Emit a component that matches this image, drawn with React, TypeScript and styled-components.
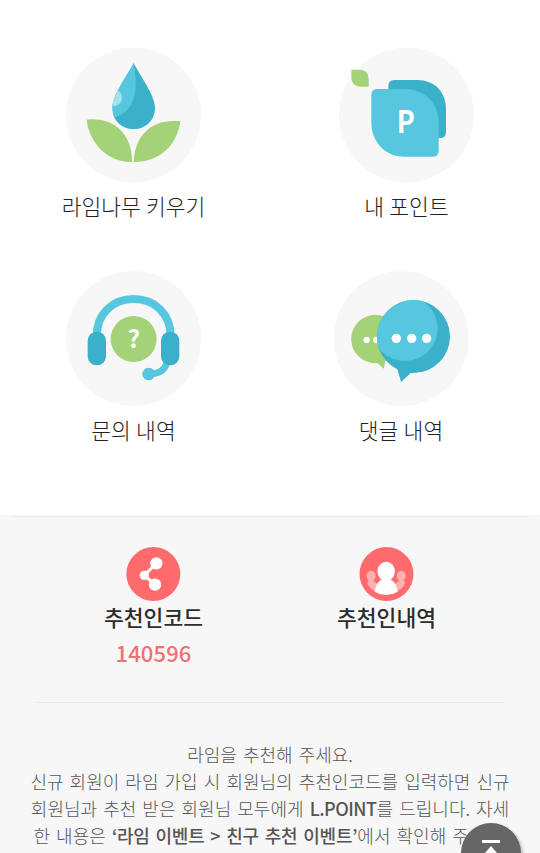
import React from 'react';
import styled, { createGlobalStyle } from 'styled-components';

const GlobalStyle = createGlobalStyle`
  * { box-sizing: border-box; }
  html, body { margin: 0; background: #fff; overflow: hidden; }
  body { font-family: "Noto Sans CJK KR", "Noto Sans", sans-serif; }
`;

const Page = styled.main`
  position: relative;
  width: 540px;
  height: 853px;
  overflow: hidden;
  background: #fff;
`;

const Menu = styled.section`
  height: 515px;
  padding-top: 47px;
`;

const MenuRow = styled.div<{ $second: number }>`
  display: grid;
  grid-template-columns: 267px ${p => p.$second}px;
  height: 224px;
`;

const MenuItem = styled.div`
  display: flex;
  flex-direction: column;
  align-items: center;
`;

const MenuIcon = styled.svg`
  display: block;
  width: 135px;
  height: 136px;
  flex: none;
`;

const MenuLabel = styled.span`
  margin-top: 8px;
  font-size: 21.5px;
  line-height: 30px;
  font-weight: 300;
  color: #222;
  white-space: nowrap;
  word-spacing: 0.5px;
`;

const Referral = styled.section`
  height: 338px;
  padding-top: 1px;
  background: #f7f7f7;
`;

const Rule = styled.hr<{ $left: number; $right: number }>`
  height: 1px;
  border: 0;
  margin: 0 ${p => p.$right}px 0 ${p => p.$left}px;
  background: #ebebeb;
`;

const ReferralRow = styled.div`
  display: grid;
  grid-template-columns: 233px 233px;
  height: 185px;
  padding: 30px 37px 0;
`;

const ReferralItem = styled.div`
  display: flex;
  flex-direction: column;
  align-items: center;
`;

const ReferralIcon = styled.svg`
  display: block;
  width: 55px;
  height: 54px;
`;

const ReferralTitle = styled.strong`
  margin-top: 1px;
  font-size: 21.5px;
  line-height: 30px;
  font-weight: 500;
  color: #2c2c2c;
  white-space: nowrap;
`;

const Code = styled.span`
  margin-top: 5px;
  font-size: 22px;
  line-height: 30px;
  font-weight: 500;
  letter-spacing: 0.1px;
  color: #f27072;
`;

const Guide = styled.p`
  margin: 38px 0 0;
  font-size: 18px;
  line-height: 27px;
  font-weight: 300;
  color: #555;
  text-align: center;
  word-spacing: 2.1px;
`;

const Line = styled.span`
  display: block;
  height: 27px;
  white-space: nowrap;
`;

const Strong = styled.b<{ $tracking: number }>`
  font-weight: 500;
  letter-spacing: ${p => p.$tracking}px;
`;

const TopButton = styled.button`
  position: absolute;
  left: 461px;
  top: 823px;
  width: 60px;
  height: 60px;
  padding: 0;
  border: 0;
  border-radius: 50%;
  background: #666;
  box-shadow: 2px 2px 3px rgba(0, 0, 0, 0.25);
  svg { display: block; }
`;

const TreeIcon = () => (
  <MenuIcon viewBox="48 51 405 408">
    <defs>
      <clipPath id="drop">
        <path d="M251 99C236 132 187 194 187 233C187 270 214 297 251 297S315 270 315 233C315 194 266 132 251 99Z" />
      </clipPath>
    </defs>
    <circle cx="250.500" cy="255" r="202.500" fill="#f7f7f7" />
    <g clipPath="url(#drop)">
      <rect x="180" y="90" width="150" height="220" fill="#3bb0ca" />
      <path d="M251 99C261 157 258 189 248 213C236 242 216 258 180 265V90Z" fill="#57c6df" />
      <circle cx="191" cy="203" r="25.500" fill="#a2e0ea" />
    </g>
    <path d="M110 269C193 260 247 314 246 396C176 397 119 344 110 269Z" fill="#a3d277" />
    <path d="M391 274C308 265 254 313 251 396C325 397 380 351 391 274Z" fill="#a3d277" />
  </MenuIcon>
);

const PointIcon = () => (
  <MenuIcon viewBox="57 51 405 408">
    <circle cx="259.500" cy="255" r="202.500" fill="#f7f7f7" />
    <path d="M94 119H119Q146 120 146 147V170H121Q94 169 94 142Z" fill="#a3d277" />
    <path d="M223 150H291C344 150 378 186 378 239V305Q378 324 360 324H205V168Q205 150 223 150Z" fill="#3bb0ca" />
    <path d="M172 177H257C316 177 356 222 356 280V362Q356 380 338 380H253C194 380 154 335 154 276V195Q154 177 172 177Z" fill="#57c6df" />
    <text x="230" y="309" fontSize="94" fontWeight="700" fontFamily="Noto Sans CJK KR, sans-serif" fill="#fff" textLength="54" lengthAdjust="spacingAndGlyphs">P</text>
  </MenuIcon>
);

const SupportIcon = () => (
  <MenuIcon viewBox="48 33 405 408">
    <circle cx="250.500" cy="235.500" r="202.500" fill="#f7f7f7" />
    <path d="M140 230C140 160 189 117 251 117S362 160 362 230" fill="none" stroke="#57c6df" strokeWidth="24" />
    <path d="M352 306C345 328 331 341 305 341" fill="none" stroke="#57c6df" strokeWidth="20" />
    <circle cx="296" cy="342" r="19" fill="#57c6df" />
    <rect x="113" y="215" width="55" height="101" rx="27" fill="#3bb0ca" />
    <rect x="333" y="215" width="55" height="101" rx="27" fill="#3bb0ca" />
    <circle cx="251" cy="237" r="69" fill="#a3d277" />
    <text x="251" y="263" textAnchor="middle" fontSize="73" fontWeight="700" fontFamily="Noto Sans CJK KR, sans-serif" fill="#fff">?</text>
  </MenuIcon>
);

const CommentIcon = () => (
  <MenuIcon viewBox="42 33 405 408">
    <defs>
      <clipPath id="bubble">
        <circle cx="280.500" cy="229.500" r="109.500" />
        <path d="M230 320L243 366L275 336Z" />
      </clipPath>
    </defs>
    <circle cx="243.500" cy="235.500" r="202.500" fill="#f7f7f7" />
    <circle cx="166" cy="237" r="72.500" fill="#a3d277" />
    <path d="M170 307L191 326L198 294Z" fill="#a3d277" />
    <circle cx="140" cy="240" r="9.500" fill="#fff" />
    <circle cx="169" cy="240" r="9.500" fill="#fff" />
    <g clipPath="url(#bubble)">
      <rect x="165" y="115" width="230" height="255" fill="#3bb0ca" />
      <circle cx="255" cy="205" r="98" fill="#57c6df" />
    </g>
    <circle cx="229" cy="235" r="14" fill="#fff" />
    <circle cx="275" cy="235" r="14" fill="#fff" />
    <circle cx="320" cy="235" r="14" fill="#fff" />
  </MenuIcon>
);

const ShareIcon = () => (
  <ReferralIcon viewBox="108 126 165 162">
    <circle cx="190" cy="207" r="81" fill="#ff6b6c" />
    <path d="M199 175L163 211L195 239" fill="none" stroke="#fff" strokeWidth="9" />
    <circle cx="199" cy="175" r="18.500" fill="#fff" />
    <circle cx="163" cy="211" r="14" fill="#fff" />
    <circle cx="195" cy="239" r="18.500" fill="#fff" />
  </ReferralIcon>
);

const PeopleIcon = () => (
  <ReferralIcon viewBox="117.500 126 165 162">
    <circle cx="200" cy="207" r="81" fill="#ff6b6c" />
    <g fill="#ffb0b2">
      <ellipse cx="154" cy="213" rx="13.500" ry="16" />
      <ellipse cx="244" cy="213" rx="13.500" ry="16" />
      <path d="M146 227H160L173 237L163 257Q144 244 142 233Z" />
      <path d="M252 227H238L225 237L235 257Q254 244 256 233Z" />
    </g>
    <ellipse cx="199" cy="199" rx="26" ry="29" fill="#fff" />
    <path d="M184 224H214Q230 234 234 260Q199 280 164 260Q168 234 184 224Z" fill="#fff" />
  </ReferralIcon>
);

export default function App() {
  return (
    <>
      <GlobalStyle />
      <Page>
        <Menu>
          <MenuRow $second={279}>
            <MenuItem><TreeIcon /><MenuLabel>라임나무 키우기</MenuLabel></MenuItem>
            <MenuItem><PointIcon /><MenuLabel>내 포인트</MenuLabel></MenuItem>
          </MenuRow>
          <MenuRow $second={268}>
            <MenuItem><SupportIcon /><MenuLabel>문의 내역</MenuLabel></MenuItem>
            <MenuItem><CommentIcon /><MenuLabel>댓글 내역</MenuLabel></MenuItem>
          </MenuRow>
        </Menu>
        <Referral>
          <Rule $left={11} $right={11} />
          <ReferralRow>
            <ReferralItem>
              <ShareIcon />
              <ReferralTitle>추천인코드</ReferralTitle>
              <Code>140596</Code>
            </ReferralItem>
            <ReferralItem>
              <PeopleIcon />
              <ReferralTitle>추천인내역</ReferralTitle>
            </ReferralItem>
          </ReferralRow>
          <Rule $left={36} $right={36} />
          <Guide>
            <Line>라임을 추천해 주세요.</Line>
            <Line>신규 회원이 라임 가입 시 회원님의 추천인코드를 입력하면 신규</Line>
            <Line>회원님과 추천 받은 회원님 모두에게 <Strong $tracking={-0.5}>L.POINT</Strong>를 드립니다. 자세</Line>
            <Line>한 내용은 <Strong $tracking={-0.25}>‘라임 이벤트 &gt; 친구 추천 이벤트’</Strong>에서 확인해 주세요.</Line>
          </Guide>
        </Referral>
        <TopButton aria-label="맨 위로">
          <svg width="60" height="60" viewBox="0 0 60 60">
            <path d="M21 17H39V20H21ZM30 23L42 37H34V46H26V37H18Z" fill="#fff" />
          </svg>
        </TopButton>
      </Page>
    </>
  );
}
